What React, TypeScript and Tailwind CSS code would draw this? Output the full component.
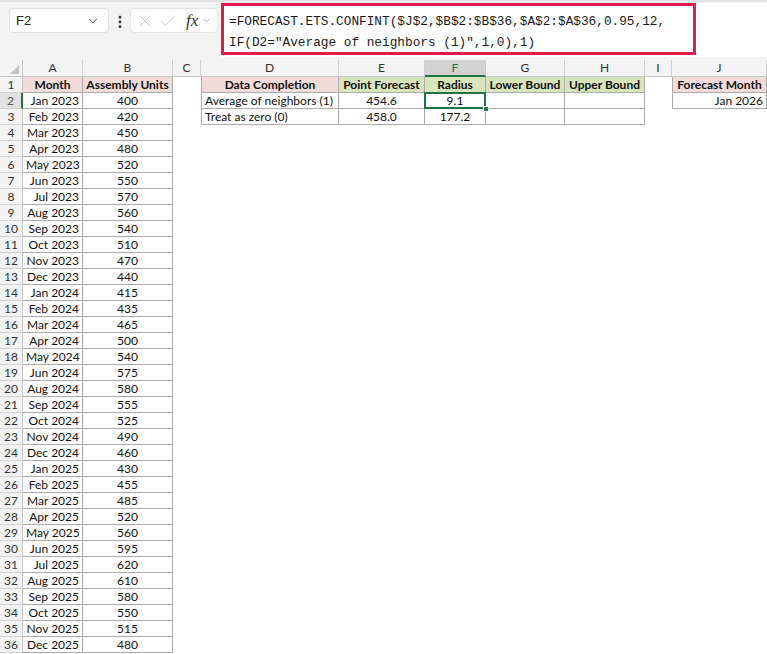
import { Check, ChevronDown, EllipsisVertical, X } from "lucide-react";

const MONTHS: [string, number][] = [
  ["Jan 2023", 400], ["Feb 2023", 420], ["Mar 2023", 450], ["Apr 2023", 480],
  ["May 2023", 520], ["Jun 2023", 550], ["Jul 2023", 570], ["Aug 2023", 560],
  ["Sep 2023", 540], ["Oct 2023", 510], ["Nov 2023", 470], ["Dec 2023", 440],
  ["Jan 2024", 415], ["Feb 2024", 435], ["Mar 2024", 465], ["Apr 2024", 500],
  ["May 2024", 540], ["Jun 2024", 575], ["Aug 2024", 580], ["Sep 2024", 555],
  ["Oct 2024", 525], ["Nov 2024", 490], ["Dec 2024", 460], ["Jan 2025", 430],
  ["Feb 2025", 455], ["Mar 2025", 485], ["Apr 2025", 520], ["May 2025", 560],
  ["Jun 2025", 595], ["Jul 2025", 620], ["Aug 2025", 610], ["Sep 2025", 580],
  ["Oct 2025", 550], ["Nov 2025", 515], ["Dec 2025", 480],
];

const LETTERS = ["A", "B", "C", "D", "E", "F", "G", "H", "I", "J"];

// bordered data cell
const CELL = "border-r border-b border-[#ababab] px-[3px] whitespace-nowrap overflow-hidden";
const PINK = "bg-[#f2dcdb] font-bold text-center";
const GREEN = "bg-[#d8e4bc] font-bold text-center";

function FormulaBar() {
  return (
    <div className="flex h-[60px] bg-[#f3f3f3] border-t-2 border-[#e3e3e3]">
      {/* name box */}
      <div className="ml-[9px] mt-[6px] w-[100px] h-[25px] bg-white border border-[#e1e1e1] rounded-[4px] flex items-center justify-between pl-[6px] pr-[8px]">
        <span className="text-[13px] text-[#222] font-['Liberation_Sans',sans-serif]">F2</span>
        <ChevronDown size={14} strokeWidth={1.6} className="text-[#333]" />
      </div>
      <div className="w-[21px] mt-[12px] flex justify-center">
        <EllipsisVertical size={16} strokeWidth={2.4} className="text-[#333]" />
      </div>
      {/* cancel / enter / fx */}
      <div className="mt-[6px] w-[88px] h-[25px] bg-white border border-[#e6e6e6] rounded-[4px] flex items-center pl-[4px]">
        <X size={20} strokeWidth={1} className="text-[#c4c4c4]" />
        <Check size={20} strokeWidth={1} className="ml-[3px] text-[#c4c4c4]" />
        <span className="ml-[8px] text-[17px] italic text-[#333] font-['Liberation_Serif',serif] leading-none">fx</span>
        <ChevronDown size={11} strokeWidth={1.5} className="ml-[3px] text-[#888]" />
      </div>
      {/* formula text */}
      <div className="ml-[3px] mt-px h-[54px] flex-1 bg-white">
        <div className="w-[475px] h-[52px] border-[3px] border-[#e5194b] pl-[5px] pt-[5px] font-['Liberation_Mono',monospace] text-[12.75px] leading-[21px] text-[#1a1a1a] whitespace-pre">
          {"=FORECAST.ETS.CONFINT($J$2,$B$2:$B$36,$A$2:$A$36,0.95,12,\nIF(D2=\"Average of neighbors (1)\",1,0),1)"}
        </div>
      </div>
    </div>
  );
}

function HeaderRow() {
  return (
    <>
      <div className="relative bg-[#f3f3f3] border-r border-b border-[#c8c8c8]">
        <svg width="9" height="9" className="absolute right-[3px] bottom-[2px]">
          <polygon points="9,0 9,9 0,9" fill="#c2c2c2" />
        </svg>
      </div>
      {LETTERS.map((l) =>
        l === "F" ? (
          <div key={l} className="bg-[#d2d2d2] border-r border-[#c8c8c8] border-b-2 border-b-[#217346] text-center text-[#217346] leading-[16px]">
            {l}
          </div>
        ) : (
          <div key={l} className="bg-[#f3f3f3] border-r border-b border-[#cfcfcf] border-b-[#c8c8c8] text-center text-[#333] leading-[16px]">
            {l}
          </div>
        )
      )}
    </>
  );
}

function RowHead({ n }: { n: number }) {
  if (n === 2)
    return (
      <div className="bg-[#e2e2e2] border-b border-[#d4d4d4] border-r-2 border-r-[#217346] text-center text-[#555]">
        {n}
      </div>
    );
  return <div className="bg-[#f3f3f3] border-r border-b border-[#d4d4d4] border-r-[#c4c4c4] text-center text-[#333]">{n}</div>;
}

function Row({ n }: { n: number }) {
  const data = n > 1 ? MONTHS[n - 2] : null;
  return (
    <>
      <RowHead n={n} />
      {n === 1 ? (
        <>
          <div className={`${CELL} ${PINK}`}>Month</div>
          <div className={`${CELL} ${PINK}`}>Assembly Units</div>
        </>
      ) : (
        <>
          <div className={`${CELL} text-right`}>{data![0]}</div>
          <div className={`${CELL} text-center`}>{data![1]}</div>
        </>
      )}
      <div />
      {n === 1 && (
        <>
          <div className={`${CELL} border-l ${PINK}`}>Data Completion</div>
          <div className={`${CELL} ${GREEN}`}>Point Forecast</div>
          <div className={`${CELL} ${GREEN}`}>Radius</div>
          <div className={`${CELL} ${GREEN}`}>Lower Bound</div>
          <div className={`${CELL} ${GREEN}`}>Upper Bound</div>
        </>
      )}
      {n === 2 && (
        <>
          <div className={`${CELL} border-l`}>Average of neighbors (1)</div>
          <div className={`${CELL} text-center`}>454.6</div>
          <div className={`${CELL} text-center relative overflow-visible`}>
            9.1
            {/* active cell outline + fill handle */}
            <div className="absolute -left-px -top-px -right-px -bottom-px border-2 border-[#217346]" />
            <div className="absolute right-[-4px] bottom-[-4px] w-[6px] h-[6px] bg-[#217346] border border-white" />
          </div>
          <div className={CELL} />
          <div className={CELL} />
        </>
      )}
      {n === 3 && (
        <>
          <div className={`${CELL} border-l`}>Treat as zero (0)</div>
          <div className={`${CELL} text-center`}>458.0</div>
          <div className={`${CELL} text-center`}>177.2</div>
          <div className={CELL} />
          <div className={CELL} />
        </>
      )}
      {n > 3 && (
        <>
          <div />
          <div />
          <div />
          <div />
          <div />
        </>
      )}
      <div />
      {n === 1 && <div className={`${CELL} border-l ${PINK}`}>Forecast Month</div>}
      {n === 2 && <div className={`${CELL} border-l text-right`}>Jan 2026</div>}
      {n > 2 && <div />}
    </>
  );
}

export default function App() {
  const rows = Array.from({ length: 36 }, (_, i) => i + 1);
  return (
    <div className="w-[767px] bg-white font-['Lato',sans-serif] text-[12px] text-[#111]">
      <FormulaBar />
      <div className="grid grid-cols-[23px_60px_90px_28px_138px_86px_61px_79px_80px_27px_95px] grid-rows-[17px_repeat(36,16px)] leading-[15px]">
        <HeaderRow />
        {rows.map((n) => (
          <Row key={n} n={n} />
        ))}
      </div>
    </div>
  );
}
